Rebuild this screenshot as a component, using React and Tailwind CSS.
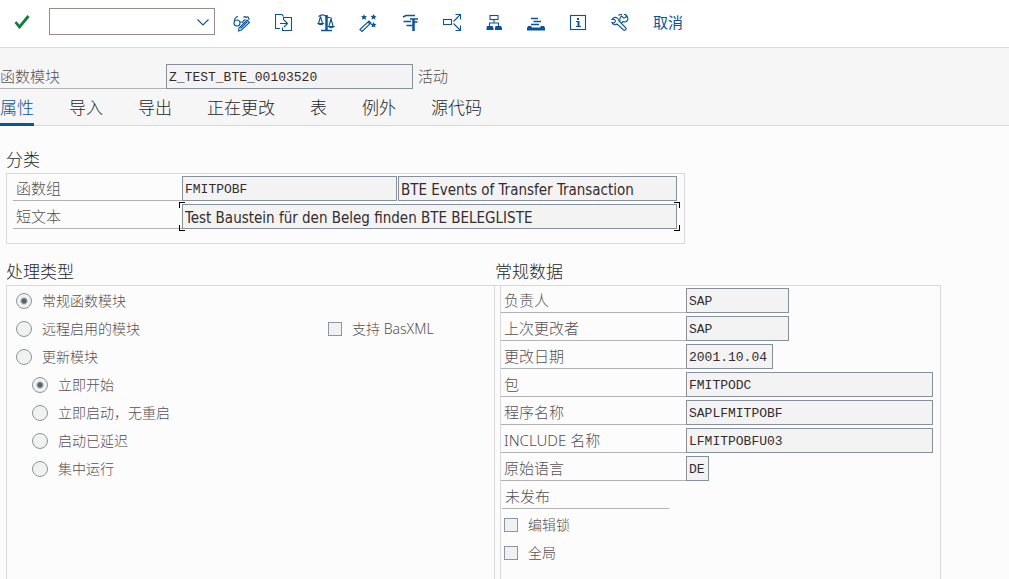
// src/pages/FunctionModule.jsx
import React from "react";

const TABS = ["属性", "导入", "导出", "正在更改", "表", "例外", "源代码"];

const TYPES = [
  { id: "normal", label: "常规函数模块" },
  { id: "remote", label: "远程启用的模块" },
  { id: "update", label: "更新模块" },
];

const UPDATE_TYPES = [
  { id: "immediate", label: "立即开始" },
  { id: "noRestart", label: "立即启动，无重启" },
  { id: "delayed", label: "启动已延迟" },
  { id: "collective", label: "集中运行" },
];

const GENERAL = [
  { id: "owner", label: "负责人", value: "SAP", width: "w-[103px]" },
  { id: "changedBy", label: "上次更改者", value: "SAP", width: "w-[103px]" },
  { id: "changedOn", label: "更改日期", value: "2001.10.04", width: "w-[87px]" },
  { id: "package", label: "包", value: "FMITPODC", width: "w-[247px]" },
  { id: "program", label: "程序名称", value: "SAPLFMITPOBF", width: "w-[247px]" },
  { id: "include", label: "INCLUDE 名称", value: "LFMITPOBFU03", width: "w-[247px]" },
  { id: "language", label: "原始语言", value: "DE", width: "w-[23px]" },
];

const TOOLS = [
  {
    name: "显示/更改",
    icon: (
      <>
        <circle cx="4" cy="9" r="3" />
        <path d="M1.500 7C1.500 4.500 2.500 3 5 2.500M7 8h3M10 9C9.500 7 11 5.500 12.500 6M10.500 3.500C11.500 2 13 2.500 13 4M13 3.500C15 2 16 3.500 16 6" />
        <path d="M5.500 17l.500-3 8-8 2.500 2.500-8 7.500z" />
        <path d="M7.500 14.500l7-7" />
      </>
    ),
  },
  {
    name: "其他对象",
    icon: (
      <>
        <path d="M5 14.500H0.500V0.500H7L8.500 2.500M8.500 6V3.500H16.500V16.500H7.500V13.500" />
        <path d="M5 9.500h7.500M9 6l3.500 3.500L9 13" />
      </>
    ),
  },
  {
    name: "检查",
    icon: (
      <>
        <path d="M1.500 2.500C4 .500 7 .500 9 2.500S13.500 2.500 15 5" />
        <path d="M9.500 1v15.500" strokeWidth="2.500" />
        <path d="M4 16.500h11" strokeWidth="1.500" />
        <path d="M3.500 2.500l-2 7M3.500 2.500l2 7M1 9.500h5.500c-1 1.500-4.500 1.500-5.500 0zM14 5l-2 7M14 5l2 7M11.500 12.500H17c-1 1.500-4.500 1.500-5.500 0z" />
      </>
    ),
  },
  {
    name: "激活",
    icon: (
      <>
        <path d="M1 15.500L10 7l2 2-9 8.500zM9 8l2 2" />
        <g fill="currentColor" stroke="none">
          <path d="M5 .200l.8 1.700 2.200 .3-1.500 1.300.5 2.200L5 4.700l-2 1 .5-2.200L2 2.200l2.200-.3z" />
          <path d="M14.500 0l.8 1.700 2.200 .3-1.500 1.300.5 2.200-2-1-2 1 .5-2.200L11.500 2l2.200-.3z" />
          <path d="M14.500 8l.8 1.700 2.200 .3-1.500 1.300.5 2.200-2-1-2 1 .5-2.200L11.500 10l2.200-.3z" />
        </g>
      </>
    ),
  },
  {
    name: "测试",
    icon: (
      <>
        <path d="M2 3L5 1.500h9" strokeWidth="1.500" />
        <path d="M9 5h8M2.500 7.500H10M5.500 11.500h6M13 8h3.500" strokeWidth="1.500" />
        <path d="M12.500 5v12" strokeWidth="2.500" />
      </>
    ),
  },
  {
    name: "使用位置列表",
    icon: (
      <>
        <rect x="0.500" y="5.500" width="8" height="5" />
        <path d="M10.500 7.500L17 1M12.500 .500H17.500V5.500M10.500 9.500L17 16M12.500 16.500H17.500V11.500" />
      </>
    ),
  },
  {
    name: "层次结构",
    icon: (
      <>
        <rect x="5" y="1.500" width="8" height="4" />
        <path d="M9 5.500v3.500M4.500 12V9h9v3" />
        <path d="M2 12h5.500l1 2v2h-7v-2zM10.500 12H16l1 2v2h-7v-2z" fill="currentColor" stroke="none" />
      </>
    ),
  },
  {
    name: "对象列表",
    icon: (
      <>
        <path d="M4 4.500h7M6.500 7.500H14M4 10.500h8" strokeWidth="1.700" />
        <path d="M1 12h3.500v1.500h9V12H17l1 2V16.500H0V14z" fill="currentColor" stroke="none" />
      </>
    ),
  },
  {
    name: "信息",
    icon: (
      <>
        <rect x="1.500" y="1.500" width="15" height="14" />
        <path d="M8 4h2v2H8zM7 7h3.500v5H12v1H7v-1h1.500V8H7z" fill="currentColor" stroke="none" />
      </>
    ),
  },
  {
    name: "工具",
    icon: (
      <>
        <path d="M1 5.500L3 3.500C5.500 3 8 4.500 8 7l7 7c.500 1.500-1 2.500-2.500 2L6 10C4 11.500 1.500 10.500 1 8.500l2.500 .500L4.500 7 3.500 5.500z" />
        <path d="M9 7.500C8.500 4.500 9 3 10.500 2l2 2L15 3.500V1C17 2.500 17.500 5.500 16 7c-1.500 1.500-3 1-4 .500L10.500 9M7.500 1.500L9 .500h2M13 .500h2" />
      </>
    ),
  },
];

function Icon({ children }) {
  return (
    <svg
      viewBox="0 0 18 18"
      className="size-[18px]"
      fill="none"
      stroke="currentColor"
      strokeWidth="1.1"
      aria-hidden="true"
    >
      {children}
    </svg>
  );
}

function Field({ id, value, className, mono = true }) {
  return (
    <input
      id={id}
      readOnly
      defaultValue={value}
      className={`h-[25px] min-w-0 border border-[#87919e] bg-[#f3f3f3] px-0.5 pt-0.5 font-normal text-[#332c2e] outline-none ${
        mono
          ? "font-['Liberation_Mono','Noto_Sans_CJK_SC',monospace] text-[13px]"
          : "font-['DejaVu_Sans_Condensed','Noto_Sans_CJK_SC',sans-serif] text-[15px]"
      } ${className}`}
    />
  );
}

function Label({ htmlFor, className, children }) {
  return (
    <label
      htmlFor={htmlFor}
      className={`h-[25px] shrink-0 border-b border-[#b2b2b2] text-[15px] leading-[25px] whitespace-nowrap ${className}`}
    >
      {children}
    </label>
  );
}

function Radio({ name, option, selected, onSelect, className = "" }) {
  return (
    <label className={`flex h-[25px] items-center gap-2.5 text-[14px] ${className}`}>
      <input
        type="radio"
        name={name}
        checked={selected === option.id}
        onChange={() => onSelect(option.id)}
        className="size-4 appearance-none rounded-full border border-[#8a939e] bg-[#f1f1f1] checked:bg-[radial-gradient(circle,#5a6268_2px,#f1f1f1_4px)]"
      />
      {option.label}
    </label>
  );
}

function Check({ label, className = "" }) {
  return (
    <label className={`flex h-[25px] items-center gap-2.5 text-[14px] ${className}`}>
      <input
        type="checkbox"
        className="size-3.5 appearance-none border border-[#8a97a8] bg-[#f1f1f1] checked:bg-[#5a6268]"
      />
      {label}
    </label>
  );
}

function Title({ children }) {
  return <h2 className="h-[27px] text-[17px] leading-[27px] text-[#22262a]">{children}</h2>;
}

export default function App() {
  const [tab, setTab] = React.useState(TABS[0]);
  const [type, setType] = React.useState("normal");
  const [updateType, setUpdateType] = React.useState("immediate");

  return (
    <div className="flex min-h-screen flex-col bg-[#fcfcfc] font-['Noto_Sans','Noto_Sans_CJK_SC',sans-serif] font-light text-[#565053]">
      {/* Toolbar */}
      <div className="flex h-12 items-center border-b border-[#d9d9d9] bg-white pb-1 pl-3.5 text-[#0854a0]">
        <button type="button" aria-label="回车" className="text-[#107e3e]">
          <svg viewBox="0 0 16 16" className="size-4" fill="none" stroke="currentColor" strokeWidth="2.800">
            <path d="M1.500 8l4 5L14.500 2" />
          </svg>
        </button>
        <div className="relative ml-[19px]">
          <select
            aria-label="命令"
            className="block h-[27px] w-[166px] appearance-none border border-[#9c8a8a] bg-white px-1 text-[14px] outline-none"
          >
            <option value=""></option>
          </select>
          <svg
            viewBox="0 0 12 7"
            className="pointer-events-none absolute top-[11px] right-1.5 h-[7px] w-3"
            fill="none"
            stroke="currentColor"
            strokeWidth="1.100"
          >
            <path d="M.500 .500l5.500 5.500L11.500 .500" />
          </svg>
        </div>
        <div className="ml-[18px] flex gap-6 pt-0.5">
          {TOOLS.map((t) => (
            <button key={t.name} type="button" aria-label={t.name}>
              <Icon>{t.icon}</Icon>
            </button>
          ))}
        </div>
        <button type="button" className="ml-6 pt-0.5 text-[15px] font-normal">取消</button>
      </div>

      {/* Module name and tabs */}
      <div className="border-b border-[#d9d9d9] bg-[#f6f6f6] pt-4">
        <div className="flex">
          <Label htmlFor="module" className="w-[166px]">函数模块</Label>
          <Field id="module" value="Z_TEST_BTE_00103520" className="w-[247px]" />
          <span className="pl-[5px] text-[15px] leading-[25px]">活动</span>
        </div>
        <div role="tablist" className="flex gap-[35px] text-[17px] text-[#22262a]">
          {TABS.map((t) => (
            <button
              key={t}
              type="button"
              role="tab"
              aria-selected={t === tab}
              onClick={() => setTab(t)}
              className={`-mb-px h-[37px] border-b-3 pt-1 whitespace-nowrap ${
                t === tab ? "border-[#0854a0] text-[#0854a0]" : "border-transparent"
              }`}
            >
              {t}
            </button>
          ))}
        </div>
      </div>

      <main className="flex flex-1 flex-col px-1.5 pt-5">
        <Title>分类</Title>
        <section className="w-full max-w-[679px] space-y-[3px] border border-[#d9d9d9] px-1.5 pt-0.5 pb-3.5">
          <div className="flex">
            <Label htmlFor="group" className="w-[169px] pl-[3px]">函数组</Label>
            <Field id="group" value="FMITPOBF" className="w-[215px]" />
            <Field id="groupText" value="BTE Events of Transfer Transaction" mono={false} className="ml-px w-[279px]" />
          </div>
          <div className="flex">
            <Label htmlFor="shortText" className="w-[169px] pl-[3px]">短文本</Label>
            <div className="relative w-[495px] min-w-0">
              <Field
                id="shortText"
                value="Test Baustein für den Beleg finden BTE BELEGLISTE"
                mono={false}
                className="block w-full"
              />
              {/* focus corners */}
              <div className="pointer-events-none absolute -inset-x-[3px] -inset-y-0.5">
                <span className="absolute top-0 left-0 size-1.5 border-t border-l border-black" />
                <span className="absolute top-0 right-0 size-1.5 border-t border-r border-black" />
                <span className="absolute bottom-0 left-0 size-1.5 border-b border-l border-black" />
                <span className="absolute right-0 bottom-0 size-1.5 border-r border-b border-black" />
              </div>
            </div>
          </div>
        </section>

        <div className="grid w-full max-w-[935px] flex-1 grid-cols-[489fr_446fr] pt-3.5">
          <section className="flex flex-col">
            <Title>处理类型</Title>
            <div className="flex-1 space-y-[3px] border border-b-0 border-[#d9d9d9] pt-0.5 pl-[9px]">
              <Radio name="type" option={TYPES[0]} selected={type} onSelect={setType} />
              <div className="flex">
                <Radio name="type" option={TYPES[1]} selected={type} onSelect={setType} className="w-[312px]" />
                <Check label="支持 BasXML" />
              </div>
              <Radio name="type" option={TYPES[2]} selected={type} onSelect={setType} />
              {UPDATE_TYPES.map((o) => (
                <Radio
                  key={o.id}
                  name="updateType"
                  option={o}
                  selected={updateType}
                  onSelect={setUpdateType}
                  className="pl-4"
                />
              ))}
            </div>
          </section>

          <section className="flex flex-col">
            <Title>常规数据</Title>
            <div className="flex flex-1 border-t border-[#d9d9d9] pl-[5px]">
              <div className="flex-1 space-y-[3px] border-x border-[#d9d9d9] pt-0.5">
                {GENERAL.map((g) => (
                  <div key={g.id} className="flex">
                    <Label htmlFor={g.id} className="w-[185px] pl-[3px]">{g.label}</Label>
                    <Field id={g.id} value={g.value} className={g.width} />
                  </div>
                ))}
                <p className="ml-px h-[25px] w-[167px] border-b border-[#b2b2b2] pl-[3px] text-[15px] leading-[25px]">
                  未发布
                </p>
                <Check label="编辑锁" className="pl-[3px]" />
                <Check label="全局" className="pl-[3px]" />
              </div>
            </div>
          </section>
        </div>
      </main>
    </div>
  );
}
